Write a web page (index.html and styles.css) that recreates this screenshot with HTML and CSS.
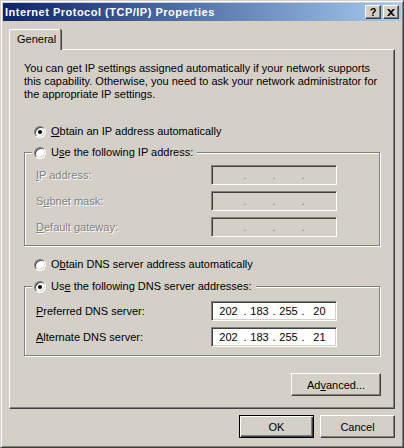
FILE: index.html
```html
<!DOCTYPE html>
<html>
<head>
    <title>Internet Protocol (TCP/IP) Properties</title>
    <link rel="stylesheet" href="styles.css">
</head>
<body>
    <div class="window">
        <div class="titlebar">
            <span class="title">Internet Protocol (TCP/IP) Properties</span>
            <div class="caption-buttons">
                <span class="caption-btn help">?</span>
                <span class="caption-btn close">
                    <svg width="8" height="7" viewBox="0 0 8 7"><path d="M0 0h2l2 2 2-2h2L5 3.5 8 7H6L4 5 2 7H0l3-3.5z" fill="#000"/></svg>
                </span>
            </div>
        </div>

        <div class="dialog-body">
            <div class="tabs">
                <div class="tab active">General</div>
            </div>

            <div class="panel">
                <p class="intro">You can get IP settings assigned automatically if your network supports<br>this capability. Otherwise, you need to ask your network administrator for<br>the appropriate IP settings.</p>

                <div class="radio-row ip-auto"><span class="radio checked"></span><span><u>O</u>btain an IP address automatically</span></div>

                <fieldset class="group ip-group disabled">
                    <legend class="radio-row"><span class="radio"></span><span class="enabled">U<u>s</u>e the following IP address:</span></legend>
                    <div class="field-row">
                        <label><u>I</u>P address:</label>
                        <div class="ipfield"><span class="octet"></span><span class="dot">.</span><span class="octet"></span><span class="dot">.</span><span class="octet"></span><span class="dot">.</span><span class="octet"></span></div>
                    </div>
                    <div class="field-row">
                        <label>S<u>u</u>bnet mask:</label>
                        <div class="ipfield"><span class="octet"></span><span class="dot">.</span><span class="octet"></span><span class="dot">.</span><span class="octet"></span><span class="dot">.</span><span class="octet"></span></div>
                    </div>
                    <div class="field-row">
                        <label><u>D</u>efault gateway:</label>
                        <div class="ipfield"><span class="octet"></span><span class="dot">.</span><span class="octet"></span><span class="dot">.</span><span class="octet"></span><span class="dot">.</span><span class="octet"></span></div>
                    </div>
                </fieldset>

                <div class="radio-row dns-auto"><span class="radio"></span><span>O<u>b</u>tain DNS server address automatically</span></div>

                <fieldset class="group dns-group">
                    <legend class="radio-row"><span class="radio checked"></span><span>Us<u>e</u> the following DNS server addresses:</span></legend>
                    <div class="field-row">
                        <label><u>P</u>referred DNS server:</label>
                        <div class="ipfield"><span class="octet">202</span><span class="dot">.</span><span class="octet">183</span><span class="dot">.</span><span class="octet">255</span><span class="dot">.</span><span class="octet">20</span></div>
                    </div>
                    <div class="field-row">
                        <label><u>A</u>lternate DNS server:</label>
                        <div class="ipfield"><span class="octet">202</span><span class="dot">.</span><span class="octet">183</span><span class="dot">.</span><span class="octet">255</span><span class="dot">.</span><span class="octet">21</span></div>
                    </div>
                </fieldset>

                <div class="panel-footer">
                    <button class="btn advanced">Ad<u>v</u>anced...</button>
                </div>
            </div>

            <div class="dialog-buttons">
                <button class="btn default">OK</button>
                <button class="btn">Cancel</button>
            </div>
        </div>
    </div>
</body>
</html>
```

FILE: styles.css
```css
* {
    box-sizing: border-box;
}

body {
    margin: 0;
    background: #d4d0c8;
    font-family: "Liberation Sans", Arial, sans-serif;
    font-size: 11px;
    color: #000;
}

u {
    text-decoration-thickness: 1px;
    text-underline-offset: 1px;
}

/* window frame */
.window {
    width: 404px;
    height: 448px;
    padding: 2px;
    background: #d4d0c8;
    border: 1px solid;
    border-color: #d4d0c8 #404040 #404040 #d4d0c8;
    box-shadow: inset 1px 1px #fff, inset -1px -1px #808080;
}

.titlebar {
    display: flex;
    align-items: center;
    justify-content: space-between;
    height: 18px;
    padding: 0 2px;
    background: linear-gradient(to right, #0a246a, #a6caf0);
}

.title {
    color: #fff;
    font-weight: bold;
    letter-spacing: 0.5px;
    line-height: 18px;
}

.caption-buttons {
    display: flex;
    gap: 2px;
}

.caption-btn {
    display: flex;
    align-items: center;
    justify-content: center;
    width: 16px;
    height: 14px;
    background: #d4d0c8;
    border: 1px solid;
    border-color: #fff #404040 #404040 #fff;
    box-shadow: inset -1px -1px #808080;
}

.caption-btn.help {
    font-weight: bold;
    font-size: 11px;
    line-height: 12px;
}

.caption-btn svg {
    display: block;
}

/* tabs */
.dialog-body {
    padding: 8px 6px 0;
}

.tabs {
    display: flex;
    height: 20px;
}

.tab {
    position: relative;
    z-index: 1;
    width: 52px;
    height: 21px;
    padding: 3px 0 0 7px;
    line-height: 13px;
    background: #d4d0c8;
    border: 1px solid;
    border-color: #fff #808080 transparent #fff;
    border-bottom: 0;
    border-radius: 2px 2px 0 0;
    box-shadow: 1px 0 #404040;
}

.panel {
    height: 360px;
    padding: 0 0 0 14px;
    border: 1px solid;
    border-color: #fff #404040 #404040 #fff;
    box-shadow: inset -1px -1px #808080;
}

.intro {
    margin: 12px 0 0;
    line-height: 13px;
    white-space: nowrap;
}

/* radio buttons */
.radio-row {
    display: flex;
    align-items: flex-start;
    gap: 5px;
    height: 13px;
    line-height: 13px;
    padding-left: 10px;
}

.radio {
    position: relative;
    flex: none;
    width: 12px;
    height: 12px;
    margin-top: 1px;
    border-radius: 50%;
    background: #fff;
    border: 1px solid;
    border-color: #808080 #fff #fff #808080;
    box-shadow: inset 1px 1px #404040, inset -1px -1px #d4d0c8;
}

.radio.checked::after {
    content: "";
    position: absolute;
    left: 3px;
    top: 3px;
    width: 4px;
    height: 4px;
    border-radius: 50%;
    background: #000;
}

.ip-auto {
    margin-top: 24px;
}

.dns-auto {
    margin-top: 12px;
}

/* group boxes */
.group {
    width: 356px;
    margin: 0;
    padding: 6px 11px 8px;
    min-width: 0;
    border: 1px solid #808080;
    box-shadow: 1px 1px #fff, inset 1px 1px #fff;
}

.group legend {
    margin-left: -4px;
    padding: 0 4px 0 2px;
    background: #d4d0c8;
}

.ip-group {
    margin-top: 8px;
}

.dns-group {
    margin-top: 9px;
    padding-top: 8px;
}

.field-row {
    display: flex;
    align-items: center;
    height: 20px;
}

.field-row + .field-row {
    margin-top: 6px;
}

.field-row label {
    width: 175px;
}

.disabled label {
    color: #808080;
    text-shadow: 1px 1px #fff;
}

.ipfield {
    display: flex;
    width: 126px;
    height: 20px;
    padding: 0 2px 0 2px;
    background: #fff;
    border: 1px solid;
    border-color: #808080 #fff #fff #808080;
    box-shadow: inset 1px 1px #404040, inset -1px -1px #d4d0c8;
    line-height: 18px;
}

.disabled .ipfield {
    background: #d4d0c8;
    color: #808080;
}

.octet {
    width: 30px;
    text-align: center;
}

.octet:nth-child(3),
.octet:nth-child(5) {
    width: 26px;
}

.dot {
    width: 4px;
    text-align: center;
}

/* buttons */
.btn {
    height: 23px;
    padding: 0;
    font-family: inherit;
    font-size: 11px;
    color: #000;
    background: #d4d0c8;
    border: 1px solid;
    border-color: #fff #404040 #404040 #fff;
    box-shadow: inset -1px -1px #808080;
}

.btn.default {
    border-color: #000;
    box-shadow: inset 1px 1px #fff, inset -1px -1px #404040, inset -2px -2px #808080;
}

.panel-footer {
    display: flex;
    justify-content: flex-end;
    width: 357px;
    margin-top: 17px;
}

.advanced {
    width: 90px;
}

.dialog-buttons {
    display: flex;
    justify-content: flex-end;
    gap: 6px;
    margin-top: 6px;
}

.dialog-buttons .btn {
    width: 75px;
}
```
